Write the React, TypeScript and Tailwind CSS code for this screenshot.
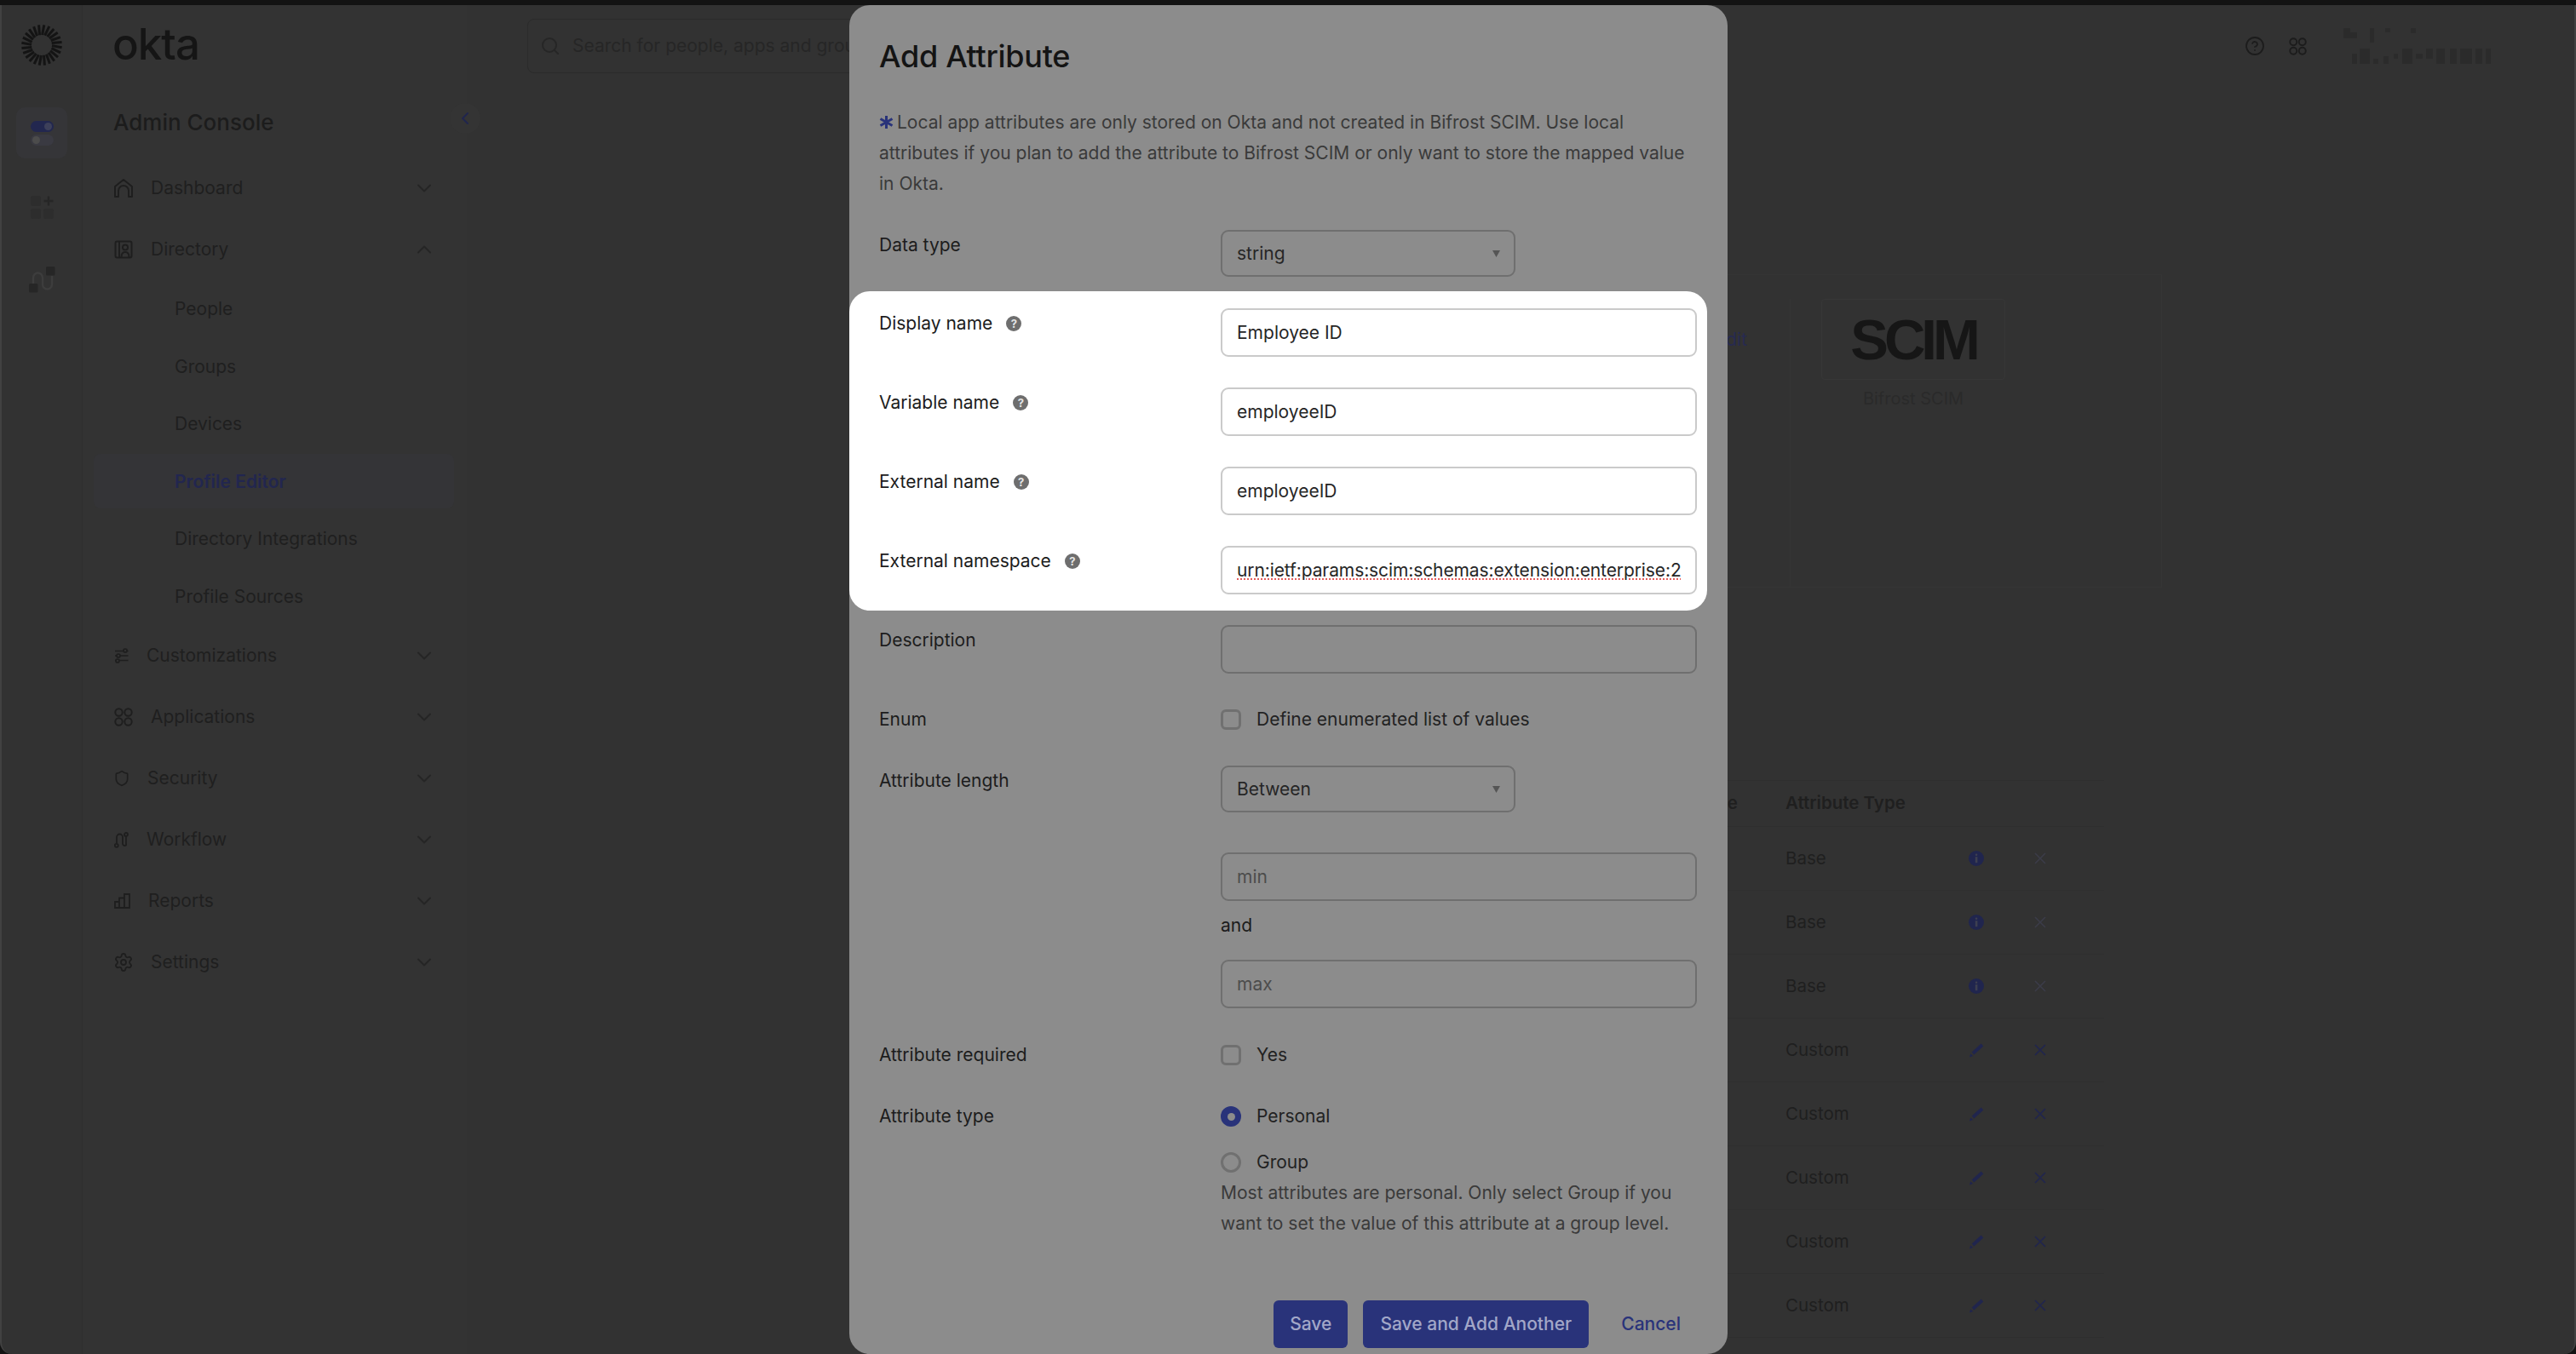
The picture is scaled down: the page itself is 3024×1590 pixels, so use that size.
import { ChevronDown, ChevronLeft, ChevronUp, CircleHelp, Search, Settings, Shield } from "lucide-react";
import type { ReactNode } from "react";

const stroke = { fill: "none", stroke: "currentColor", strokeWidth: 2, strokeLinecap: "round" as const, strokeLinejoin: "round" as const };

function HomeIcon() {
  return (
    <svg width="22" height="24" viewBox="0 0 22 24" {...stroke}>
      <path d="M1 22V10l10-8 10 8v12h-4v-7a6 6 0 0 0-12 0v7H1z" />
    </svg>
  );
}

function DirectoryIcon() {
  return (
    <svg width="22" height="22" viewBox="0 0 22 22" {...stroke}>
      <rect x="1.5" y="1.5" width="19" height="19" rx="2" />
      <path d="M6 2v18" />
      <circle cx="13" cy="8.5" r="3" />
      <path d="M8.5 20c0-4 2-6 4.5-6s4.5 2 4.5 6" />
    </svg>
  );
}

function SlidersIcon() {
  return (
    <svg width="17" height="18" viewBox="0 0 17 18" fill="none" stroke="currentColor" strokeWidth="1.7">
      <path d="M1 3.5h10M15 3.5h1.5M1 9h2M7 9h9.5M1 14.5h1M6 14.5h10.5" />
      <circle cx="13" cy="3" r="2" />
      <circle cx="5" cy="9" r="2" />
      <circle cx="4" cy="15" r="2" />
    </svg>
  );
}

function AppsIcon({ size = 22 }: { size?: number }) {
  return (
    <svg width={size} height={size} viewBox="0 0 22 22" fill="none" stroke="currentColor" strokeWidth="2">
      <circle cx="5.5" cy="5.5" r="4.2" />
      <circle cx="16.5" cy="5.5" r="4.2" />
      <circle cx="5.5" cy="16.5" r="4.2" />
      <circle cx="16.5" cy="16.5" r="4.2" />
    </svg>
  );
}

function WorkflowIcon() {
  return (
    <svg width="17" height="19" viewBox="0 0 17 19" fill="none" stroke="currentColor" strokeWidth="1.8">
      <circle cx="2.8" cy="15.8" r="2" />
      <circle cx="14" cy="3" r="2" />
      <path d="M3 13V6a3.5 3.5 0 0 1 7 0v8a2.5 2.5 0 0 0 4 1.5V6" />
    </svg>
  );
}

function ReportsIcon() {
  return (
    <svg width="19" height="18" viewBox="0 0 19 18" fill="none" stroke="currentColor" strokeWidth="1.8">
      <path d="M1 17V10h5v7zM6 17V5.5h6V17zM12 17V1h6v16z" />
    </svg>
  );
}

function SunburstLogo() {
  const rays = Array.from({ length: 24 }, (_, i) => i * 15);
  return (
    <svg width="48" height="48" viewBox="-24 -24 48 48">
      {rays.map((deg) => (
        <path key={deg} d="M0.6 -12 L2.8 -23.6" stroke="#141414" strokeWidth="3" transform={`rotate(${deg})`} />
      ))}
    </svg>
  );
}

function RedactedName() {
  const blocks = [
    [2751, 35, 8, 12], [2759, 40, 8, 7], [2782, 35, 5, 17], [2800, 35, 6, 5], [2830, 35, 6, 6],
    [2761, 65, 6, 12], [2770, 59, 12, 18], [2786, 71, 6, 6], [2798, 68, 6, 9], [2810, 65, 5, 6],
    [2820, 59, 12, 18], [2836, 65, 8, 6], [2848, 59, 8, 12], [2860, 59, 10, 18], [2876, 59, 8, 18],
    [2888, 59, 14, 18], [2906, 59, 8, 18], [2918, 59, 6, 18],
  ];
  return (
    <svg width="175" height="42" viewBox="2750 35 175 42">
      {blocks.map(([x, y, w, h]) => (
        <rect key={`${x}-${y}`} x={x} y={y} width={w} height={h} fill="#2b2b2b" />
      ))}
    </svg>
  );
}

function NavItem({ icon, label, open }: { icon: ReactNode; label: string; open?: boolean }) {
  return (
    <div className="flex h-[72px] items-center gap-[21px] pl-[37px] pr-[36px] text-[#1f1f1f]">
      <div className="flex shrink-0 items-center text-[#1e1e1e]">{icon}</div>
      <span className="flex-1 text-[21px] leading-[36px]">{label}</span>
      {open ? <ChevronUp size={28} strokeWidth={1.7} className="text-[#252525]" /> : <ChevronDown size={28} strokeWidth={1.7} className="text-[#252525]" />}
    </div>
  );
}

function SubItem({ label, active }: { label: string; active?: boolean }) {
  return (
    <div
      className={
        active
          ? "my-[1.75px] ml-[13px] mr-[15px] flex h-[64px] items-center rounded-[8px] bg-[#343437] pl-[95px] text-[21px] font-semibold text-[#22264f]"
          : "my-[1.75px] ml-[13px] mr-[15px] flex h-[64px] items-center pl-[95px] text-[21px] text-[#1f1f1f]"
      }
    >
      {label}
    </div>
  );
}

function Rail() {
  return (
    <div className="flex w-[95px] shrink-0 flex-col items-center border-r border-[#2e2e2e] pt-[23px]">
      <SunburstLogo />
      <div className="mt-[49px] flex h-[60px] w-[60px] flex-col items-center justify-center gap-[3px] rounded-[10px] bg-[#353538]">
        <div className="flex h-[13px] w-[27px] items-center justify-end rounded-full bg-[#22274f] pr-[2px]">
          <div className="h-[9px] w-[9px] rounded-full bg-[#3d405a]" />
        </div>
        <div className="flex h-[13px] w-[27px] items-center rounded-full bg-[#3a3a42] pl-[2px]">
          <div className="h-[9px] w-[9px] rounded-full bg-[#4c4c4c]" />
        </div>
      </div>
      <div className="mt-[27px] flex h-[60px] w-[60px] items-center justify-center">
        <svg width="31" height="31" viewBox="33 227 31 31">
          <rect x="35" y="229" width="12" height="12" rx="2.5" fill="#2d2d2d" />
          <rect x="35" y="244" width="12" height="12" rx="2.5" fill="#2d2d2d" />
          <rect x="50" y="244" width="12" height="12" rx="2.5" fill="#2d2d2d" />
          <path d="M56 229.5v11M50.5 235h11" stroke="#262626" strokeWidth="2.4" />
        </svg>
      </div>
      <div className="mt-[25px] flex h-[60px] w-[60px] items-center justify-center">
        <svg width="34" height="34" viewBox="31 311 34 34" fill="none">
          <path d="M38 333v-7a5.5 5.5 0 0 1 11 0v8a5.5 5.5 0 0 0 11 0v-10" stroke="#3d3d3d" strokeWidth="2.4" />
          <rect x="53" y="313" width="10.5" height="10.5" rx="1.5" fill="#262626" />
          <rect x="33" y="333" width="10.5" height="10.5" rx="1.5" fill="#262626" />
        </svg>
      </div>
    </div>
  );
}

function Sidebar() {
  return (
    <aside className="relative w-[452px] shrink-0 border-r border-[#323232] bg-[#333333]">
      <div className="ml-[35px] mt-[21px] w-fit text-[51px] font-medium leading-[50px] tracking-[-1px] text-[#151515]">okta</div>
      <div className="mt-[49px] w-fit pl-[36px] text-[26px] font-medium leading-[36px] text-[#1c1c1c]">Admin Console</div>
      <div className="mt-[23px] flex flex-col">
        <NavItem icon={<HomeIcon />} label="Dashboard" />
        <NavItem icon={<DirectoryIcon />} label="Directory" open />
        <SubItem label="People" />
        <SubItem label="Groups" />
        <SubItem label="Devices" />
        <SubItem label="Profile Editor" active />
        <SubItem label="Directory Integrations" />
        <SubItem label="Profile Sources" />
        <NavItem icon={<SlidersIcon />} label="Customizations" />
        <NavItem icon={<AppsIcon />} label="Applications" />
        <NavItem icon={<Shield size={20} strokeWidth={2} className="-mx-px" />} label="Security" />
        <NavItem icon={<WorkflowIcon />} label="Workflow" />
        <NavItem icon={<ReportsIcon />} label="Reports" />
        <NavItem icon={<Settings size={24} strokeWidth={1.8} className="-mx-px" />} label="Settings" />
      </div>
      <div className="absolute right-[-16px] top-[115px] flex h-[36px] w-[36px] items-center justify-center rounded-full bg-[#343434] text-[#20254e]">
        <ChevronLeft size={24} strokeWidth={2} />
      </div>
    </aside>
  );
}

function TableRow({ type, locked }: { type: string; locked: boolean }) {
  return (
    <div className="flex h-[75px] items-center border-b border-[#2f2f2f] pl-[995px] text-[20.5px] text-[#1f1f1f]">
      <span className="w-[215px]">{type}</span>
      {locked ? (
        <svg width="18" height="18" viewBox="0 0 18 18">
          <circle cx="9" cy="9" r="9" fill="#20254e" />
          <rect x="7.8" y="3.4" width="2.6" height="2.6" rx="1.3" fill="#3d3f50" />
          <rect x="7.8" y="7.2" width="2.6" height="7" fill="#3d3f50" />
        </svg>
      ) : (
        <svg width="18" height="18" viewBox="0 0 18 18" fill="none">
          <path d="M5 13 L16 3" stroke="#20254e" strokeWidth="4" />
          <path d="M1 17.5 L2.2 13.2 L5.2 16 Z" fill="#20254e" />
        </svg>
      )}
      <svg width="14" height="14" viewBox="0 0 14 14" fill="none" className="ml-[59px]">
        <path d="M1 1l12 12M13 1L1 13" stroke={locked ? "#3b3c48" : "#20254e"} strokeWidth="1.7" />
      </svg>
    </div>
  );
}

function Main() {
  const rows = ["Base", "Base", "Base", "Custom", "Custom", "Custom", "Custom", "Custom"];
  return (
    <main className="min-w-0 flex-1">
      <header className="flex items-center justify-between pl-[70px] pr-[97px] pt-[16px]">
        <div className="flex h-[64px] w-[640px] items-center gap-[14px] rounded-[8px] border border-[#2b2b2b] pl-[14px] text-[21px] text-[#262626]">
          <Search size={24} strokeWidth={2} />
          Search for people, apps and groups
        </div>
        <div className="flex items-center">
          <CircleHelp size={24} strokeWidth={1.8} className="text-[#1c1c1c]" />
          <div className="ml-[28px] text-[#1c1c1c]">
            <AppsIcon size={21} />
          </div>
          <div className="ml-[42px]">
            <RedactedName />
          </div>
        </div>
      </header>
      <section className="ml-[552px] mt-[236px] flex h-[368px] w-[1437px] border border-[#353535]">
        <div className="flex-1 pt-[58px] text-right text-[21px] leading-[36px] text-[#272a50]">Edit</div>
        <div className="ml-[50px] mt-[28px] w-[436px] border-l border-[#353535] pl-[36px]">
          <div className="flex h-[95px] w-[216px] items-center justify-center rounded-[4px] border border-[#373737]">
            <span className="text-[67px] font-black leading-none tracking-[-5px] text-[#161616] [font-family:'Liberation_Sans',sans-serif]">SCIM</span>
          </div>
          <div className="mt-[4px] w-[216px] text-center text-[20px] leading-[36px] text-[#2a2a2a]">Bifrost SCIM</div>
        </div>
      </section>
      <section className="ml-[552px] mt-[226px] w-[1369px] border-t border-[#2f2f2f]">
        <div className="flex h-[54px] items-center border-b border-[#2f2f2f] text-[20.5px] font-semibold text-[#1f1f1f]">
          <span className="w-[939px] text-right">Name</span>
          <span className="ml-[56px]">Attribute Type</span>
        </div>
        {rows.map((type, i) => (
          <TableRow key={i} type={type} locked={type === "Base"} />
        ))}
      </section>
    </main>
  );
}

function Help() {
  return (
    <span className="ml-[16px] flex h-[18px] w-[18px] shrink-0 items-center justify-center rounded-full bg-[#6e6e6e] text-[13px] font-bold leading-none text-[#e4e4e4]">?</span>
  );
}

function FieldRow({ label, help, children }: { label: string; help?: boolean; children: ReactNode }) {
  return (
    <div className="ml-[35px] flex">
      <div className="flex h-[36px] w-[401px] shrink-0 items-center text-[21px] text-[#1c1c1c]">
        {label}
        {help && <Help />}
      </div>
      <div className="w-[559px]">{children}</div>
    </div>
  );
}

function TextBox({ value, placeholder, bright, flagged }: { value?: string; placeholder?: string; bright?: boolean; flagged?: boolean }) {
  return (
    <div
      className={
        bright
          ? "flex h-[57px] items-center rounded-[9px] border-2 border-[#cacaca] bg-white pl-[17px] pr-[8px] text-[21px] text-[#262626]"
          : "flex h-[57px] items-center rounded-[9px] border-2 border-[#6f6f6f] pl-[17px] pr-[8px] text-[21px] text-[#4c4c4c]"
      }
    >
      <span className={flagged ? "whitespace-nowrap tracking-[-0.1px] underline decoration-[#e35c5c] decoration-dotted decoration-2 underline-offset-[3px]" : "whitespace-nowrap"}>
        {value ?? placeholder}
      </span>
    </div>
  );
}

function SelectBox({ value }: { value: string }) {
  return (
    <div className="flex h-[55px] w-[346px] items-center justify-between rounded-[9px] border-2 border-[#6f6f6f] pl-[17px] pr-[16px] text-[21px] text-[#262626]">
      {value}
      <svg width="9" height="8" viewBox="0 0 9 8">
        <path d="M0 0h9L4.5 8z" fill="#555555" />
      </svg>
    </div>
  );
}

function Choice({ label, kind, checked }: { label: string; kind: "box" | "radio"; checked?: boolean }) {
  return (
    <div className="flex h-[36px] items-center gap-[18px] text-[21px] text-[#222222]">
      {checked ? (
        <div className="flex h-[24px] w-[24px] items-center justify-center rounded-full bg-[#29337a]">
          <div className="h-[9px] w-[9px] rounded-full bg-[#8c8c8c]" />
        </div>
      ) : (
        <div className={kind === "radio" ? "h-[24px] w-[24px] rounded-full border-[3px] border-[#707070]" : "h-[24px] w-[24px] rounded-[6px] border-[3px] border-[#707070]"} />
      )}
      {label}
    </div>
  );
}

function AddAttributeModal() {
  return (
    <div className="absolute left-[997px] top-[6px] flex h-[1584px] w-[1031px] flex-col overflow-hidden rounded-[24px] bg-[#8c8c8c]">
      <h1 className="ml-[35px] mt-[38px] text-[36px] font-medium leading-[44px] tracking-[-0.3px] text-[#141414]">Add Attribute</h1>
      <p className="ml-[35px] mt-[38px] w-[958px] text-[21px] leading-[36px] text-[#3a3a3a]">
        <svg width="17" height="15" viewBox="0 0 17 15" className="mb-[3px] mr-[4px] inline-block" fill="none" stroke="#29337a" strokeWidth="3">
          <path d="M8.5 0v15M1.5 3.5l14 8M15.5 3.5l-14 8" />
        </svg>
        Local app attributes are only stored on Okta and not created in Bifrost SCIM. Use local attributes if you plan to add the attribute to Bifrost SCIM or only want to store the mapped value in Okta.
      </p>
      <div className="mt-[36px]">
        <FieldRow label="Data type">
          <SelectBox value="string" />
        </FieldRow>
      </div>
      <div className="mt-[17px] flex w-[1007px] flex-col gap-[36px] rounded-[24px] bg-white pb-[19px] pt-[20px]">
        <FieldRow label="Display name" help>
          <TextBox value="Employee ID" bright />
        </FieldRow>
        <FieldRow label="Variable name" help>
          <TextBox value="employeeID" bright />
        </FieldRow>
        <FieldRow label="External name" help>
          <TextBox value="employeeID" bright />
        </FieldRow>
        <FieldRow label="External namespace" help>
          <TextBox value="urn:ietf:params:scim:schemas:extension:enterprise:2" bright flagged />
        </FieldRow>
      </div>
      <div className="mt-[17px]">
        <FieldRow label="Description">
          <TextBox placeholder="" />
        </FieldRow>
      </div>
      <div className="mt-[36px]">
        <FieldRow label="Enum">
          <Choice kind="box" label="Define enumerated list of values" />
        </FieldRow>
      </div>
      <div className="mt-[36px]">
        <FieldRow label="Attribute length">
          <SelectBox value="Between" />
          <div className="mt-[47px]">
            <TextBox placeholder="min" />
          </div>
          <div className="mt-[11px] text-[21px] leading-[36px] text-[#1c1c1c]">and</div>
          <div className="mt-[22px]">
            <TextBox placeholder="max" />
          </div>
        </FieldRow>
      </div>
      <div className="mt-[37px]">
        <FieldRow label="Attribute required">
          <Choice kind="box" label="Yes" />
        </FieldRow>
      </div>
      <div className="mt-[36px]">
        <FieldRow label="Attribute type">
          <Choice kind="radio" label="Personal" checked />
          <div className="mt-[18px]">
            <Choice kind="radio" label="Group" />
          </div>
          <p className="text-[21px] leading-[36px] text-[#3a3a3a]">
            Most attributes are personal. Only select Group if you want to set the value of this attribute at a group level.
          </p>
        </FieldRow>
      </div>
      <div className="mt-[72px] flex items-center justify-end pr-[55px] text-[21px] font-medium">
        <button className="h-[56px] w-[87px] rounded-[6px] bg-[#29337a] text-[#a2a7c8]">Save</button>
        <button className="ml-[18px] h-[56px] w-[265px] rounded-[6px] bg-[#29337a] text-[#a2a7c8]">Save and Add Another</button>
        <button className="ml-[38px] text-[#29337a]">Cancel</button>
      </div>
    </div>
  );
}

export default function App() {
  return (
    <div className="relative h-[1590px] w-[3024px] overflow-hidden bg-[#131313] pt-[6px] [font-family:Inter,sans-serif]">
      <div className="flex h-[1584px] overflow-hidden rounded-b-[14px] border-x-2 border-[#414141] bg-[#323232]">
        <Rail />
        <Sidebar />
        <Main />
      </div>
      <AddAttributeModal />
    </div>
  );
}
